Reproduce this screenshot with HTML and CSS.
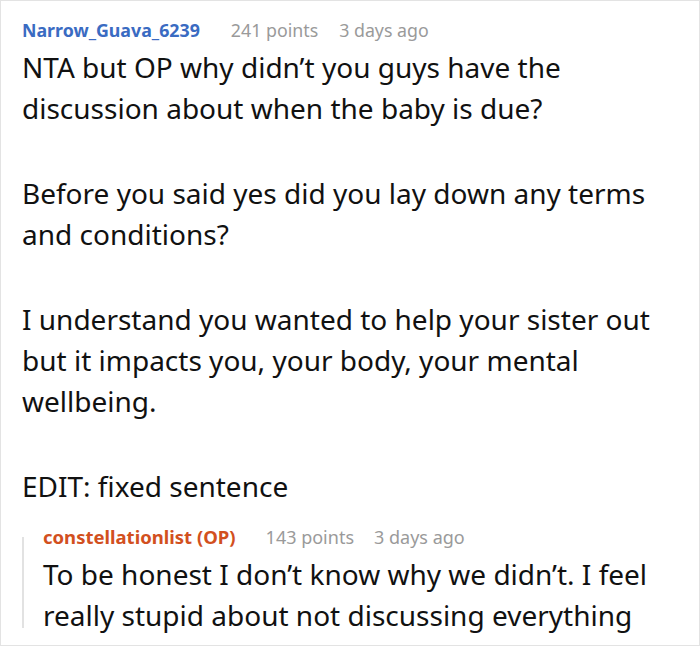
FILE: index.html
```html
<!DOCTYPE html>
<html>
<head>
<meta charset="utf-8">
<link rel="stylesheet" href="styles.css">
</head>
<body>
<div class="card">
  <div class="comment">
    <div class="meta">
      <span class="author">Narrow_Guava_6239</span>
      <span class="info">241 points</span>
      <span class="info">3 days ago</span>
    </div>
    <div class="body">
      <p>NTA but OP why didn’t you guys have the discussion about when the baby is due?</p>
      <p>Before you said yes did you lay down any terms and conditions?</p>
      <p>I understand you wanted to help your sister out but it impacts you, your body, your mental wellbeing.</p>
      <p>EDIT: fixed sentence</p>
    </div>
    <div class="reply">
      <div class="meta meta-reply">
        <span class="author op">constellationlist (OP)</span>
        <span class="info">143 points</span>
        <span class="info">3 days ago</span>
      </div>
      <div class="body">
        <p>To be honest I don’t know why we didn’t. I feel really stupid about not discussing everything</p>
      </div>
    </div>
  </div>
</div>
</body>
</html>
```

FILE: styles.css
```css
html, body {
  margin: 0;
  padding: 0;
  background: #fff;
}
.card {
  box-sizing: border-box;
  width: 700px;
  height: 646px;
  border: 1px solid #e3e3e3;
  overflow: hidden;
  font-family: "Noto Sans", "Open Sans", sans-serif;
  color: #111;
}
.comment {
  padding: 15px 20px 0 21px;
}
.meta {
  display: flex;
  align-items: baseline;
  gap: 21px;
  font-size: 17.8px;
  line-height: 28px;
}
.author {
  font-weight: 700;
  color: #3a6bc2;
  margin-right: 10px;
}
.author.op {
  color: #d2501e;
}
.meta-reply {
  font-size: 18px;
  gap: 20px;
}
.meta-reply .author {
  font-size: 18.5px;
  margin-right: 10px;
}
.info {
  color: #9a9a9a;
}
.body {
  font-size: 28px;
  line-height: 41px;
  margin-top: 3px;
}
.body p {
  margin: 0 0 44px 0;
}
.body p:last-child {
  margin-bottom: 0;
}
.reply {
  position: relative;
  margin-top: 16px;
  padding-left: 21px;
}
.reply::before {
  content: "";
  position: absolute;
  left: 0;
  top: 14px;
  bottom: 8px;
  width: 2px;
  background: #e2e2e2;
}
```
